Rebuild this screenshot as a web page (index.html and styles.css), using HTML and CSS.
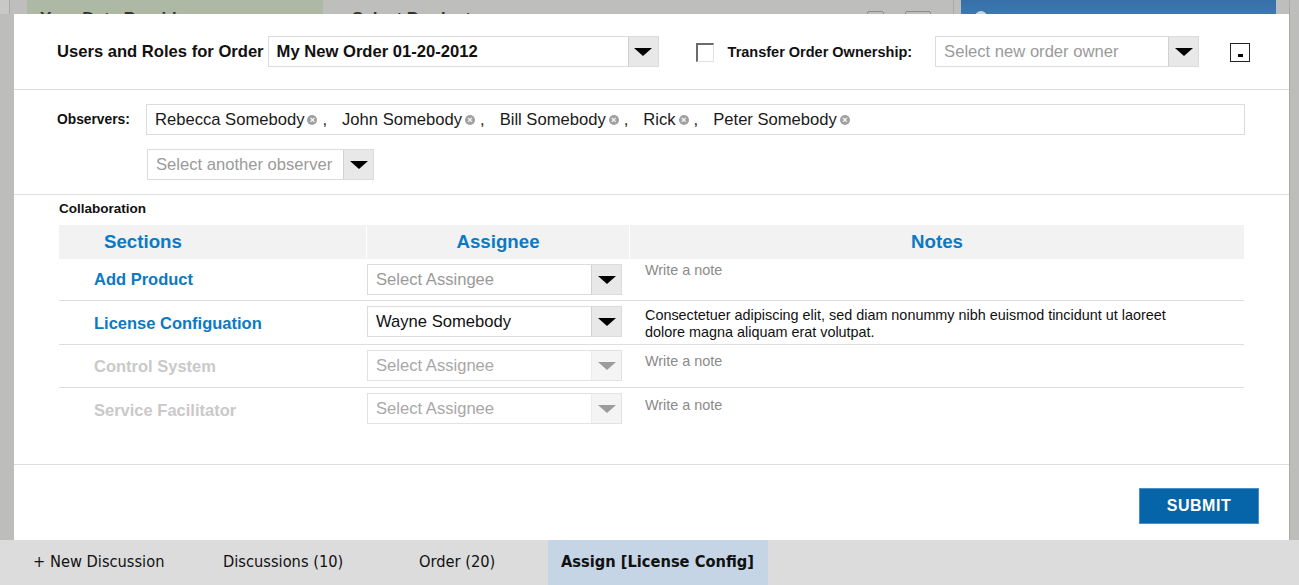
FILE: index.html
```html
<!DOCTYPE html>
<html>
<head>
<meta charset="utf-8">
<title>Users and Roles</title>
<link rel="stylesheet" href="styles.css">
</head>
<body>
<div class="page">
  <div class="app-strip">
    <div class="strip-edge"></div>
    <div class="strip-green"><span>Your Data Provider</span></div>
    <div class="strip-gray">
      <span class="strip-title">Select Product</span>
      <span class="strip-box b1"></span>
      <span class="strip-box b2"></span>
    </div>
    <div class="strip-blue"><span class="strip-dot"></span></div>
    <div class="strip-end"></div>
  </div>

  <div class="middle">
    <div class="side side-left"></div>
    <div class="modal">
      <div class="hdr">
        <span class="hdr-label">Users and Roles for Order</span>
        <div class="select sel-order">
          <span class="sel-text strong">My New Order 01-20-2012</span>
          <span class="sel-arrow"><span class="tri"></span></span>
        </div>
        <span class="checkbox"></span>
        <span class="transfer-label">Transfer Order Ownership:</span>
        <div class="select sel-owner">
          <span class="sel-text ph">Select new order owner</span>
          <span class="sel-arrow"><span class="tri"></span></span>
        </div>
        <span class="min-btn"><span class="min-dash"></span></span>
      </div>

      <div class="obs">
        <div class="obs-row">
          <span class="obs-label">Observers:</span>
          <div class="tags">
            <span class="tag">Rebecca Somebody<span class="x">&#215;</span></span><span class="sep">,</span>
            <span class="tag">John Somebody<span class="x">&#215;</span></span><span class="sep">,</span>
            <span class="tag">Bill Somebody<span class="x">&#215;</span></span><span class="sep">,</span>
            <span class="tag">Rick<span class="x">&#215;</span></span><span class="sep">,</span>
            <span class="tag">Peter Somebody<span class="x">&#215;</span></span>
          </div>
        </div>
        <div class="select sel-observer">
          <span class="sel-text ph">Select another observer</span>
          <span class="sel-arrow"><span class="tri"></span></span>
        </div>
      </div>

      <div class="collab">
        <div class="collab-title">Collaboration</div>
        <div class="grid">
          <div class="grow ghead">
            <div class="gh gh-sections">Sections</div>
            <div class="gh gh-center">Assignee</div>
            <div class="gh gh-center">Notes</div>
          </div>
          <div class="grow r1">
            <div class="gsec">Add Product</div>
            <div class="gasg">
              <div class="select sel-asg">
                <span class="sel-text ph">Select Assingee</span>
                <span class="sel-arrow"><span class="tri"></span></span>
              </div>
            </div>
            <div class="gnote ph">Write a note</div>
          </div>
          <div class="grow r2">
            <div class="gsec">License Configuation</div>
            <div class="gasg">
              <div class="select sel-asg">
                <span class="sel-text">Wayne Somebody</span>
                <span class="sel-arrow"><span class="tri"></span></span>
              </div>
            </div>
            <div class="gnote">Consectetuer adipiscing elit, sed diam nonummy nibh euismod tincidunt ut laoreet dolore magna aliquam erat volutpat.</div>
          </div>
          <div class="grow r3 disabled">
            <div class="gsec">Control System</div>
            <div class="gasg">
              <div class="select sel-asg">
                <span class="sel-text ph">Select Assignee</span>
                <span class="sel-arrow"><span class="tri"></span></span>
              </div>
            </div>
            <div class="gnote ph">Write a note</div>
          </div>
          <div class="grow r4 disabled last">
            <div class="gsec">Service Facilitator</div>
            <div class="gasg">
              <div class="select sel-asg">
                <span class="sel-text ph">Select Assignee</span>
                <span class="sel-arrow"><span class="tri"></span></span>
              </div>
            </div>
            <div class="gnote ph">Write a note</div>
          </div>
        </div>
      </div>

      <div class="footer">
        <button class="submit">SUBMIT</button>
      </div>
    </div>
    <div class="side side-right"></div>
  </div>

  <div class="tabbar">
    <span class="tab t1">+ New Discussion</span>
    <span class="tab t2">Discussions (10)</span>
    <span class="tab t3">Order (20)</span>
    <span class="tab t4 active">Assign [License Config]</span>
  </div>
</div>
</body>
</html>
```

FILE: styles.css
```css
* { box-sizing: border-box; }
html, body { margin: 0; padding: 0; }
body {
  width: 1299px;
  height: 585px;
  overflow: hidden;
  background: #bebebc;
  font-family: "Liberation Sans", Arial, sans-serif;
  color: #111;
}
.page {
  display: flex;
  flex-direction: column;
  height: 585px;
}

/* background application strip */
.app-strip {
  height: 14px;
  display: flex;
  overflow: hidden;
  background: #bebebc;
}
.strip-edge {
  width: 10px;
  background: #c8c8c6;
  border-right: 1px solid #a9a9a7;
  margin-right: 17px;
}
.strip-green {
  width: 296px;
  background: #adb8a5;
  padding: 9px 0 0 13px;
  font-weight: bold;
  font-size: 17px;
  color: #333;
  white-space: nowrap;
}
.strip-gray {
  width: 631px;
  position: relative;
  padding: 9px 0 0 29px;
  font-weight: bold;
  font-size: 17px;
  color: #333;
  border-right: 1px solid #a8a8a6;
  margin-right: 7px;
  white-space: nowrap;
}
.strip-box {
  position: absolute;
  top: 11px;
  height: 10px;
  border: 1px solid #8e8e8e;
  border-radius: 2px;
}
.strip-box.b1 { left: 544px; width: 17px; }
.strip-box.b2 { left: 582px; width: 26px; }
.strip-blue {
  width: 315px;
  background: linear-gradient(#3670a8, #3d78ae);
  position: relative;
}
.strip-dot {
  position: absolute;
  left: 14px;
  top: 11px;
  width: 12px;
  height: 12px;
  border-radius: 50%;
  background: #c8d6e4;
}
.strip-end {
  flex: 1;
  border-right: 1px solid #a8a8a6;
  margin-right: 9px;
}

/* middle */
.middle {
  flex: 1;
  display: flex;
  min-height: 0;
}
.side-left { width: 14px; background: #bdbdbb; }
.side-right { width: 10px; background: #bdbdbb; border-left: 1px solid #a9a9a7; }
.modal {
  flex: 1;
  background: #fff;
  display: flex;
  flex-direction: column;
}

/* selects */
.select {
  display: flex;
  height: 31px;
  border: 1px solid #dcdcdc;
  background: #fff;
}
.sel-text {
  flex: 1;
  padding-left: 8px;
  font-size: 16.6px;
  line-height: 29px;
  white-space: nowrap;
  overflow: hidden;
  color: #111;
}
.sel-text.strong { font-weight: bold; }
.sel-text.ph { color: #9a9a9a; }
.sel-arrow {
  width: 30px;
  background: #e8e8e8;
  border-left: 1px solid #d0d0d0;
  display: flex;
  align-items: center;
  justify-content: center;
}
.tri {
  width: 0;
  height: 0;
  border-left: 9px solid transparent;
  border-right: 9px solid transparent;
  border-top: 8px solid #000;
}

/* header row */
.hdr {
  height: 76px;
  border-bottom: 1px solid #dedede;
  display: flex;
  align-items: center;
  padding: 0 0 0 43px;
}
.hdr-label {
  font-size: 16.6px;
  font-weight: bold;
  margin-right: 4px;
  white-space: nowrap;
}
.sel-order { width: 391px; }
.checkbox {
  width: 18px;
  height: 19px;
  margin-left: 37px;
  border-top: 2px solid #6b6b6b;
  border-left: 2px solid #6b6b6b;
  border-right: 1px solid #e2e2e2;
  border-bottom: 1px solid #e2e2e2;
  background: #fff;
  margin-top: 2px;
}
.transfer-label {
  font-size: 14.5px;
  font-weight: bold;
  margin-left: 14px;
  margin-right: 23px;
  white-space: nowrap;
}
.sel-owner { width: 264px; }
.min-btn {
  margin-left: 31px;
  width: 20px;
  height: 19px;
  border: 1px solid #222;
  position: relative;
  margin-top: 2px;
}
.min-dash {
  position: absolute;
  left: 7px;
  top: 10px;
  width: 5px;
  height: 3px;
  background: #000;
}

/* observers */
.obs {
  height: 105px;
  border-bottom: 1px solid #dedede;
  padding: 14px 0 0 43px;
}
.obs-row {
  display: flex;
  align-items: center;
}
.obs-label {
  font-size: 13.8px;
  font-weight: bold;
  width: 89px;
}
.tags {
  width: 1099px;
  height: 31px;
  border: 1px solid #dcdcdc;
  display: flex;
  align-items: center;
  padding-left: 8px;
  font-size: 16.6px;
  color: #1a1a1a;
  white-space: nowrap;
}
.tag {
  display: inline-flex;
  align-items: center;
}
.x {
  display: inline-flex;
  align-items: center;
  justify-content: center;
  width: 10px;
  height: 10px;
  border-radius: 50%;
  background: #a0a0a0;
  color: #fff;
  font-size: 9px;
  line-height: 10px;
  font-weight: bold;
  margin-left: 3px;
  margin-top: 1px;
}
.sep {
  margin-left: 5px;
  margin-right: 15px;
}
.sel-observer {
  width: 227px;
  margin: 14px 0 0 90px;
}

/* collaboration */
.collab {
  flex: 1;
  padding: 5px 45px 0 45px;
  border-bottom: 1px solid #dedede;
}
.collab-title {
  font-size: 13.5px;
  font-weight: bold;
  height: 25px;
  line-height: 15px;
  padding-top: 1px;
}
.grow {
  display: grid;
  grid-template-columns: 307px 262px 1fr;
  column-gap: 1px;
  border-bottom: 1px solid #dedede;
}
.grow.last { border-bottom: none; }
.ghead {
  border-bottom: none;
  height: 34px;
}
.gh {
  background: #f2f2f2;
  color: #0b7ac4;
  font-weight: bold;
  font-size: 18.7px;
  line-height: 34px;
}
.gh-sections { padding-left: 45px; }
.gh-center { text-align: center; }
.gsec {
  color: #0b79c4;
  font-weight: bold;
  font-size: 16.5px;
  padding-left: 35px;
  display: flex;
  align-items: center;
}
.gasg {
  padding: 5px 0 5px 0;
}
.sel-asg { width: 255px; }
.gnote {
  font-size: 14.4px;
  line-height: 17px;
  padding: 3px 60px 4px 15px;
  color: #111;
}
.gnote.ph { color: #8a8a8a; }
.grow.disabled .gsec { color: #c9c9c9; }
.grow.disabled .select { border-color: #e2e2e2; }
.grow.disabled .sel-text.ph { color: #a8a8a8; }
.grow.disabled .sel-arrow { background: #f4f4f4; border-left-color: #ececec; }
.grow.disabled .tri { border-top-color: #9c9c9c; }

.r1 { height: 42px; }
.r1 .gnote { padding-top: 3px; }
.r2 { height: 44px; }
.r2 .gnote { padding-top: 6px; }
.r3 { height: 43px; }
.r3 .gnote { padding-top: 8px; }
.r4 { height: 44px; }
.r4 .gnote { padding-top: 9px; }

/* footer */
.footer {
  height: 75px;
  display: flex;
  justify-content: flex-end;
  align-items: flex-start;
  padding: 23px 30px 0 0;
}
.submit {
  width: 120px;
  height: 36px;
  background: #0565a8;
  border: 1px solid #4d8ec4;
  color: #fff;
  font-family: "Liberation Sans", Arial, sans-serif;
  font-weight: bold;
  font-size: 16px;
  letter-spacing: 0.5px;
}

/* tab bar */
.tabbar {
  height: 45px;
  background: #dcdcdc;
  display: flex;
  padding-left: 20px;
  font-family: "DejaVu Sans Condensed", "DejaVu Sans", sans-serif;
  font-size: 16.3px;
  color: #111;
}
.tab {
  display: flex;
  align-items: center;
  padding: 0 13px 2px 13px;
  white-space: nowrap;
}
.t1 { width: 190px; }
.t2 { width: 196px; }
.t3 { width: 142px; }
.t4 { width: 220px; }
.tab.active {
  background: #c5d5e5;
  font-weight: bold;
}
```
